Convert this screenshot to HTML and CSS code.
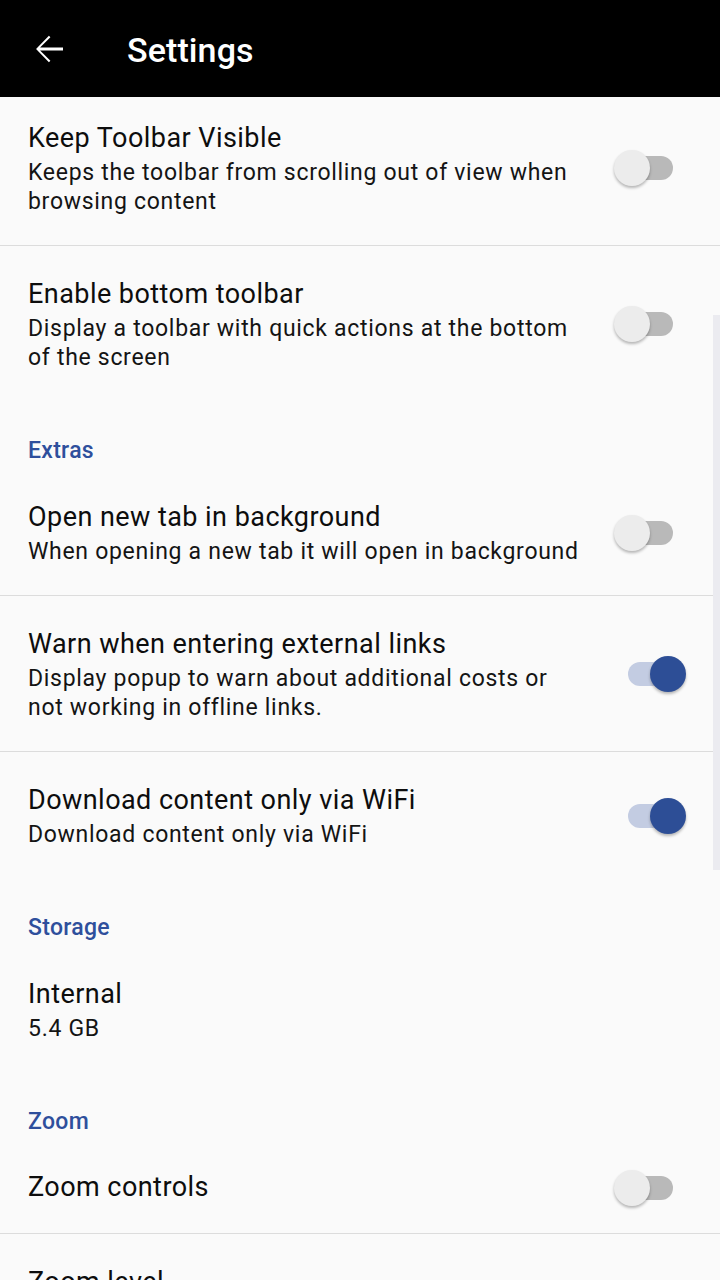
FILE: index.html
```html
<!DOCTYPE html>
<html>
<head>
<meta charset="utf-8">
<link rel="stylesheet" href="styles.css">
</head>
<body>
<header class="appbar">
  <svg class="back" viewBox="0 0 24 24" width="42" height="42"><path fill="#fff" d="M20 11.2H6.9l5.9-5.9-.85-.85L4.6 12l7.35 7.55.85-.85-5.9-5.9H20z"/></svg>
  <h1 class="title">Settings</h1>
</header>
<main class="screen">
  <div class="list">
    <div class="pref divided">
      <div class="text"><div class="ptitle">Keep Toolbar Visible</div><div class="psub">Keeps the toolbar from scrolling out of view when browsing content</div></div>
      <div class="switch"><span class="track"></span><span class="thumb"></span></div>
    </div>
    <div class="pref">
      <div class="text"><div class="ptitle">Enable bottom toolbar</div><div class="psub">Display a toolbar with quick actions at the bottom of the screen</div></div>
      <div class="switch"><span class="track"></span><span class="thumb"></span></div>
    </div>
    <div class="category">Extras</div>
    <div class="pref divided">
      <div class="text"><div class="ptitle">Open new tab in background</div><div class="psub">When opening a new tab it will open in background</div></div>
      <div class="switch"><span class="track"></span><span class="thumb"></span></div>
    </div>
    <div class="pref divided">
      <div class="text"><div class="ptitle">Warn when entering external links</div><div class="psub">Display popup to warn about additional costs or not working in offline links.</div></div>
      <div class="switch on"><span class="track"></span><span class="thumb"></span></div>
    </div>
    <div class="pref">
      <div class="text"><div class="ptitle">Download content only via WiFi</div><div class="psub">Download content only via WiFi</div></div>
      <div class="switch on"><span class="track"></span><span class="thumb"></span></div>
    </div>
    <div class="category">Storage</div>
    <div class="pref">
      <div class="text"><div class="ptitle">Internal</div><div class="psub">5.4 GB</div></div>
    </div>
    <div class="category">Zoom</div>
    <div class="pref divided single">
      <div class="text"><div class="ptitle">Zoom controls</div></div>
      <div class="switch"><span class="track"></span><span class="thumb"></span></div>
    </div>
    <div class="pref last">
      <div class="text"><div class="ptitle">Zoom level</div></div>
    </div>
  </div>
  <div class="scrollbar"></div>
</main>
</body>
</html>
```
FILE: styles.css
```css
* { box-sizing: border-box; }
html, body { margin: 0; padding: 0; }
body {
  width: 720px;
  height: 1280px;
  overflow: hidden;
  background: #fafafa;
  font-family: Roboto, "Noto Sans", sans-serif;
  color: #111;
}
.appbar {
  height: 97px;
  background: #000;
  display: flex;
  align-items: center;
  position: relative;
  z-index: 2;
}
.back {
  margin-left: 28px;
  margin-top: 1px;
  flex: none;
}
.title {
  margin: 3px 0 0 57px;
  font-size: 34px;
  font-weight: 500;
  color: #fff;
  letter-spacing: 0.1px;
}
.screen {
  position: relative;
  height: 1183px;
  overflow: hidden;
}
.list {
  margin-top: -7px;
}
.pref {
  display: flex;
  align-items: center;
  padding: 30px 34px 29px 28px;
}
.pref.divided { border-bottom: 1px solid #dcdcdc; }
.pref.single { padding-top: 29px; padding-bottom: 26px; }
.text { flex: 1; min-width: 0; padding-right: 29px; }
.ptitle {
  font-size: 27px;
  line-height: 36px;
  letter-spacing: 0.45px;
  color: #0d0d0d;
  margin-bottom: 2px;
}
.psub {
  font-size: 23px;
  line-height: 29px;
  letter-spacing: 0.7px;
  color: #141414;
}
.category {
  padding: 37px 28px 5px;
  font-size: 23px;
  line-height: 26px;
  font-weight: 500;
  letter-spacing: 0.3px;
  color: #2e4f9c;
}
.switch {
  position: relative;
  width: 72px;
  height: 36px;
  flex: none;
}
.track {
  position: absolute;
  left: 14px;
  right: 13px;
  top: 6px;
  height: 24px;
  border-radius: 12px;
  background: #b9b9b9;
}
.thumb {
  position: absolute;
  left: 0;
  top: 0;
  width: 36px;
  height: 36px;
  border-radius: 50%;
  background: #ececec;
  box-shadow: 0 2px 3px rgba(0,0,0,0.28);
}
.switch.on .track { background: #c3cce2; }
.switch.on .thumb { left: 36px; background: #2d4e96; }
.scrollbar {
  position: absolute;
  right: 0;
  top: 218px;
  width: 7px;
  height: 555px;
  background: #ebebf0;
}
```
